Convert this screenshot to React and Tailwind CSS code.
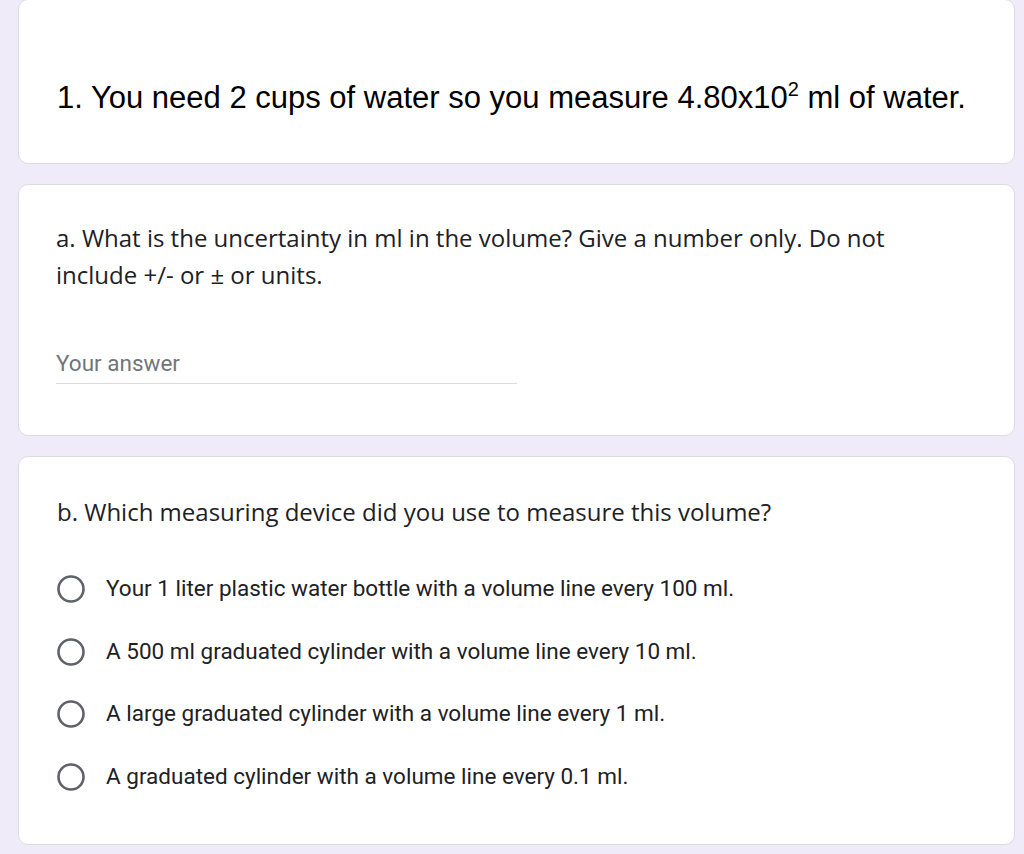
import React from "react";

function Radio() {
  return (
    <svg width="28" height="28" viewBox="0 0 28 28" className="shrink-0">
      <circle cx="14" cy="14" r="12.5" fill="none" stroke="#5f6368" strokeWidth="2.6" />
    </svg>
  );
}

const options = [
  "Your 1 liter plastic water bottle with a volume line every 100 ml.",
  "A 500 ml graduated cylinder with a volume line every 10 ml.",
  "A large graduated cylinder with a volume line every 1 ml.",
  "A graduated cylinder with a volume line every 0.1 ml.",
];

export default function App() {
  return (
    <div className="w-[1024px] h-[854px] overflow-hidden bg-[#f0ebf8]">
      <div className="ml-[18px] w-[997px] flex flex-col gap-[20px]">
        <div className="h-[165px] -mt-[1px] bg-white border border-[#dadce0] rounded-[10px] pt-[80px] pl-[38px]">
          <div className="text-[31px] leading-[36px] text-black whitespace-nowrap" style={{ fontFamily: '"Liberation Sans", Arial, sans-serif' }}>
            1. You need 2 cups of water so you measure 4.80x10<span className="text-[20px] relative -top-[12px] leading-none">2</span> ml of water.
          </div>
        </div>

        <div className="h-[252px] bg-white border border-[#dadce0] rounded-[10px] pt-[34px] pl-[37px]">
          <div className="text-[24px] leading-[37px] text-[#202124]" style={{ fontFamily: '"Open Sans", sans-serif' }}>
            <div className="whitespace-nowrap">a. What is the uncertainty in ml in the volume? Give a number only. Do not</div>
            <div className="whitespace-nowrap">include +/- or ± or units.</div>
          </div>
          <div className="mt-[57px] w-[461px] border-b border-[#dadce0] pb-[7px]">
            <div className="text-[22.5px] leading-[26px] text-[#70757a]" style={{ fontFamily: 'Roboto, sans-serif' }}>Your answer</div>
          </div>
        </div>

        <div className="h-[389px] bg-white border border-[#dadce0] rounded-[10px] pt-[36px] pl-[38px]">
          <div className="text-[24px] leading-[37px] text-[#202124] whitespace-nowrap" style={{ fontFamily: '"Open Sans", sans-serif' }}>
            b. Which measuring device did you use to measure this volume?
          </div>
          <div className="mt-[28px] flex flex-col">
            {options.map((o) => (
              <div key={o} className="h-[62.5px] flex items-center gap-[21px]">
                <Radio />
                <span className="text-[22.5px] text-[#202124] whitespace-nowrap" style={{ fontFamily: 'Roboto, sans-serif' }}>{o}</span>
              </div>
            ))}
          </div>
        </div>
      </div>
    </div>
  );
}
